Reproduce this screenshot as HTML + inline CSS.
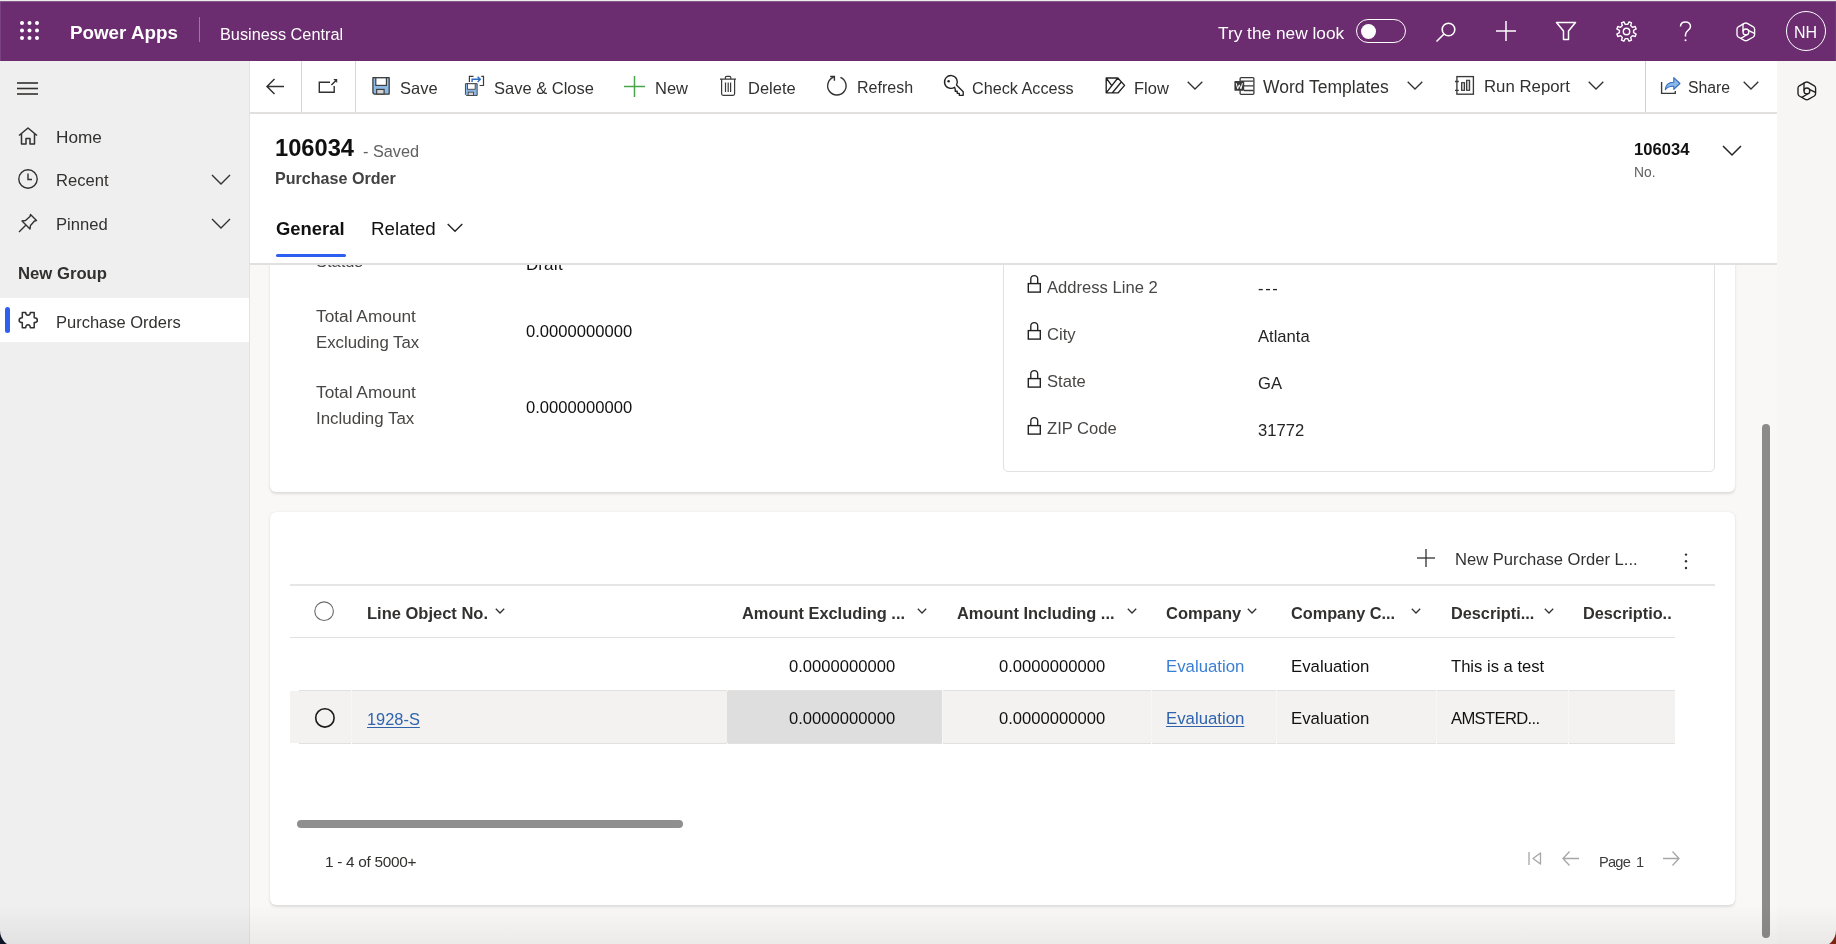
<!DOCTYPE html><html><head><meta charset="utf-8"><style>
html,body{margin:0;padding:0;width:1836px;height:944px;overflow:hidden;font-family:"Liberation Sans",sans-serif;}
body{position:relative}
.t{position:absolute;white-space:nowrap;will-change:transform}
svg{overflow:visible}
</style></head><body>
<div style="position:absolute;left:0px;top:0px;width:1836px;height:944px;background:#f9f8f7"></div>
<div style="position:absolute;left:0px;top:61px;width:249px;height:883px;background:#efefef"></div>
<div style="position:absolute;left:249px;top:61px;width:1px;height:883px;background:#e3e3e3"></div>
<div style="position:absolute;left:1777px;top:61px;width:59px;height:883px;background:#f7f6f5"></div>
<div style="position:absolute;left:250px;top:61px;width:1527px;height:52px;background:#fff"></div>
<div style="position:absolute;left:250px;top:112px;width:1527px;height:2px;background:#e2e0de"></div>
<div style="position:absolute;left:250px;top:114px;width:1527px;height:149px;background:#fff"></div>
<div style="position:absolute;left:250px;top:263px;width:1527px;height:2px;background:#e0e0e0"></div>
<div style="position:absolute;left:0px;top:0px;width:1836px;height:1px;background:#e9ece9"></div>
<div style="position:absolute;left:0px;top:1px;width:1836px;height:60px;background:#6b2d70"></div>
<div style="position:absolute;left:0px;top:1px;width:1836px;height:1px;background:#875a8b"></div>
<div style="position:absolute;left:0px;top:2px;width:1px;height:59px;background:#7a4280"></div>
<div style="position:absolute;left:1835px;top:2px;width:1px;height:59px;background:#74397a"></div>
<svg style="position:absolute;left:20px;top:21px;" width="20" height="20" viewBox="0 0 20 20"><circle cx="2.0" cy="2.0" r="2" fill="#fff"/><circle cx="2.0" cy="9.5" r="2" fill="#fff"/><circle cx="2.0" cy="17.0" r="2" fill="#fff"/><circle cx="9.5" cy="2.0" r="2" fill="#fff"/><circle cx="9.5" cy="9.5" r="2" fill="#fff"/><circle cx="9.5" cy="17.0" r="2" fill="#fff"/><circle cx="17.0" cy="2.0" r="2" fill="#fff"/><circle cx="17.0" cy="9.5" r="2" fill="#fff"/><circle cx="17.0" cy="17.0" r="2" fill="#fff"/></svg>
<div class="t" style="left:70px;top:24.09px;font-size:18.8px;line-height:18.8px;font-weight:700;color:#fff;">Power Apps</div>
<div style="position:absolute;left:199px;top:17px;width:1px;height:25px;background:rgba(255,255,255,0.35)"></div>
<div class="t" style="left:220px;top:25.50px;font-size:16.3px;line-height:16.3px;font-weight:400;color:#fff;">Business Central</div>
<div class="t" style="left:1218px;top:24.66px;font-size:17.3px;line-height:17.3px;font-weight:400;color:#fff;">Try the new look</div>
<div style="position:absolute;left:1356px;top:19px;width:50px;height:24px;border:1.5px solid #fff;border-radius:12px;box-sizing:border-box"></div>
<div style="position:absolute;left:1361px;top:24px;width:15px;height:15px;background:#fff;border-radius:50%"></div>
<svg style="position:absolute;left:1434px;top:20px;" width="24" height="24" viewBox="0 0 24 24"><circle cx="14.5" cy="9.5" r="6.3" fill="none" stroke="#fff" stroke-width="1.6"/><line x1="10" y1="14" x2="2.5" y2="21.5" stroke="#fff" stroke-width="1.6"/></svg>
<svg style="position:absolute;left:1496px;top:21px;" width="20" height="20" viewBox="0 0 20 20"><line x1="10" y1="0" x2="10" y2="20" stroke="#fff" stroke-width="1.5"/><line x1="0" y1="10" x2="20" y2="10" stroke="#fff" stroke-width="1.5"/></svg>
<svg style="position:absolute;left:1555px;top:21px;" width="22" height="20" viewBox="0 0 22 20"><path d="M1.5 1.5 H20.5 L13.5 10 V18.5 H8.5 V10 Z" fill="none" stroke="#fff" stroke-width="1.5" stroke-linejoin="round"/></svg>
<svg style="position:absolute;left:1615.5px;top:20.5px;" width="21" height="21" viewBox="0 0 21 21"><path d="M17.59 11.74 L20.16 13.10 L19.16 15.49 L16.39 14.64 L14.64 16.39 L15.49 19.16 L13.10 20.16 L11.74 17.59 L9.26 17.59 L7.90 20.16 L5.51 19.16 L6.36 16.39 L4.61 14.64 L1.84 15.49 L0.84 13.10 L3.41 11.74 L3.41 9.26 L0.84 7.90 L1.84 5.51 L4.61 6.36 L6.36 4.61 L5.51 1.84 L7.90 0.84 L9.26 3.41 L11.74 3.41 L13.10 0.84 L15.49 1.84 L14.64 4.61 L16.39 6.36 L19.16 5.51 L20.16 7.90 L17.59 9.26 Z" fill="none" stroke="#fff" stroke-width="1.4" stroke-linejoin="round"/><circle cx="10.5" cy="10.5" r="3.2" fill="none" stroke="#fff" stroke-width="1.4"/></svg>
<svg style="position:absolute;left:1679px;top:21px;" width="13" height="21" viewBox="0 0 13 21"><path d="M1.5 5.5 C1.5 2.5 3.8 0.9 6.5 0.9 C9.2 0.9 11.5 2.6 11.5 5.5 C11.5 9 6.5 9.5 6.5 13.5 V15.5" fill="none" stroke="#fff" stroke-width="1.5"/><circle cx="6.5" cy="19.3" r="1" fill="#fff"/></svg>
<svg style="position:absolute;left:1731px;top:17px;" width="30" height="30" viewBox="0 0 30 30"><path d="M13.3 6.4 Q14.8 5.6 16.3 6.4 L22.3 9.8 Q23.6 10.6 23.6 12.2 V17.6 Q23.6 19.2 22.3 20 L16.3 23.4 Q14.8 24.2 13.3 23.4 L7.3 20 Q6 19.2 6 17.6 V12.2 Q6 10.6 7.3 9.8 Z" fill="none" stroke="#fff" stroke-width="1.35" stroke-linejoin="round"/><circle cx="14.9" cy="14.9" r="2.9" fill="none" stroke="#fff" stroke-width="1.35"/><path d="M12 6.6 V14.6 M17.3 13.4 L23.4 16.4 M16.3 17.5 L9.9 21.4" fill="none" stroke="#fff" stroke-width="1.35"/></svg>
<div style="position:absolute;left:1786px;top:11px;width:40px;height:40px;border:1.5px solid #fff;border-radius:50%;box-sizing:border-box"></div>
<div class="t" style="left:1794px;top:24.66px;font-size:16px;line-height:16px;font-weight:400;color:#fff;">NH</div>
<svg style="position:absolute;left:17px;top:82px;" width="21" height="13" viewBox="0 0 21 13"><line x1="0" y1="1" x2="21" y2="1" stroke="#323130" stroke-width="1.6"/><line x1="0" y1="6.5" x2="21" y2="6.5" stroke="#323130" stroke-width="1.6"/><line x1="0" y1="12" x2="21" y2="12" stroke="#323130" stroke-width="1.6"/></svg>
<svg style="position:absolute;left:18px;top:127px;" width="20" height="18" viewBox="0 0 20 18"><path d="M1 8.5 L10 1 L19 8.5 M3.5 6.5 V17 H8 V11.5 H12 V17 H16.5 V6.5" fill="none" stroke="#323130" stroke-width="1.5" stroke-linejoin="round"/></svg>
<div class="t" style="left:56px;top:129.24px;font-size:17.2px;line-height:17.2px;font-weight:400;color:#323130;">Home</div>
<svg style="position:absolute;left:18px;top:169px;" width="20" height="20" viewBox="0 0 20 20"><circle cx="10" cy="10" r="9.2" fill="none" stroke="#323130" stroke-width="1.4"/><path d="M10 4.5 V10.5 H14" fill="none" stroke="#323130" stroke-width="1.4"/></svg>
<div class="t" style="left:56px;top:173.35px;font-size:16.6px;line-height:16.6px;font-weight:400;color:#323130;">Recent</div>
<svg style="position:absolute;left:211px;top:174px;" width="20" height="11" viewBox="0 0 20 11"><path d="M1 1 L10 10 L19 1" fill="none" stroke="#323130" stroke-width="1.4"/></svg>
<svg style="position:absolute;left:18px;top:213px;" width="20" height="20" viewBox="0 0 20 20"><path d="M12.5 1.5 L18.5 7.5 L16.5 8 L12.5 12.5 L12 16 L4 8 L7.5 7.5 L12 3.5 Z M7.5 12.5 L1 19" fill="none" stroke="#323130" stroke-width="1.4" stroke-linejoin="round"/></svg>
<div class="t" style="left:56px;top:216.55px;font-size:16.6px;line-height:16.6px;font-weight:400;color:#323130;">Pinned</div>
<svg style="position:absolute;left:211px;top:218px;" width="20" height="11" viewBox="0 0 20 11"><path d="M1 1 L10 10 L19 1" fill="none" stroke="#323130" stroke-width="1.4"/></svg>
<div class="t" style="left:18px;top:265.66px;font-size:16.7px;line-height:16.7px;font-weight:700;color:#323130;">New Group</div>
<div style="position:absolute;left:0px;top:298px;width:249px;height:44px;background:#fff"></div>
<div style="position:absolute;left:5px;top:307px;width:5px;height:26px;background:#2d5ff0;border-radius:3px"></div>
<svg style="position:absolute;left:14px;top:306px;" width="30" height="30" viewBox="0 0 30 30"><path d="M8.3 6.6 H11.7 C11.7 10.2 16.3 10.2 16.3 6.6 H20.2 V11.8 C24.4 11.8 24.4 16.6 20.2 16.6 V21.8 H16.3 C16.3 17.6 11.7 17.6 11.7 21.8 H8.3 V16.6 C4.1 16.6 4.1 11.8 8.3 11.8 Z" fill="none" stroke="#323130" stroke-width="1.5" stroke-linejoin="round"/></svg>
<div class="t" style="left:56px;top:314.23px;font-size:16.5px;line-height:16.5px;font-weight:400;color:#323130;">Purchase Orders</div>
<svg style="position:absolute;left:266px;top:78px;" width="19" height="17" viewBox="0 0 19 17"><path d="M8.5 1 L1 8.5 L8.5 16 M1 8.5 H18" fill="none" stroke="#323130" stroke-width="1.5"/></svg>
<div style="position:absolute;left:301px;top:61px;width:1px;height:51px;background:#d6d6d6"></div>
<svg style="position:absolute;left:313px;top:72px;" width="30" height="30" viewBox="0 0 30 30"><path d="M17 10.2 H6.3 V20.3 H21.2 V14" fill="none" stroke="#323130" stroke-width="1.4"/><path d="M18.4 13.1 L23 8.4" fill="none" stroke="#323130" stroke-width="1.45"/><path d="M20.3 7 H24.2 V10.9 Z" fill="#323130"/></svg>
<div style="position:absolute;left:355px;top:61px;width:1px;height:51px;background:#d6d6d6"></div>
<svg style="position:absolute;left:368px;top:72px;" width="30" height="30" viewBox="0 0 30 30"><path d="M4.9 5.6 H21.2 V22 H6.2 L4.9 20.7 Z" fill="#8cb8e8" stroke="#3a3a3a" stroke-width="1.25" stroke-linejoin="round"/><rect x="7.8" y="5.8" width="10.6" height="7.6" fill="#fff" stroke="#3a3a3a" stroke-width="1.15"/><rect x="8.7" y="17.4" width="7.4" height="4.6" fill="#d4d4d4" stroke="#3a3a3a" stroke-width="1.15"/></svg>
<div class="t" style="left:400px;top:79.73px;font-size:16.5px;line-height:16.5px;font-weight:400;color:#323130;">Save</div>
<svg style="position:absolute;left:460px;top:72px;" width="30" height="30" viewBox="0 0 30 30"><g transform="translate(1.9,7.6) scale(0.72)"><path d="M4.9 5.6 H21.2 V22 H6.2 L4.9 20.7 Z" fill="#8cb8e8" stroke="#3a3a3a" stroke-width="1.25" stroke-linejoin="round"/><rect x="7.8" y="5.8" width="10.6" height="7.6" fill="#fff" stroke="#3a3a3a" stroke-width="1.15"/><rect x="8.7" y="17.4" width="7.4" height="4.6" fill="#d4d4d4" stroke="#3a3a3a" stroke-width="1.15"/></g><path d="M9.4 10 V4.4 H13.5 M21.3 4.4 H23.5 V13.5 H19.6" fill="none" stroke="#3a3a3a" stroke-width="1.2"/><path d="M12.1 10 V7.3 H20.2 M17.6 4.7 L20.3 7.3 L17.6 9.9" fill="none" stroke="#2f6cbf" stroke-width="1.4"/></svg>
<div class="t" style="left:494px;top:79.73px;font-size:16.5px;line-height:16.5px;font-weight:400;color:#323130;">Save &amp; Close</div>
<svg style="position:absolute;left:624px;top:76px;" width="21" height="21" viewBox="0 0 21 21"><line x1="10.5" y1="0" x2="10.5" y2="21" stroke="#4aa54a" stroke-width="1.5"/><line x1="0" y1="10.5" x2="21" y2="10.5" stroke="#4aa54a" stroke-width="1.5"/></svg>
<div class="t" style="left:655px;top:79.73px;font-size:16.5px;line-height:16.5px;font-weight:400;color:#323130;">New</div>
<svg style="position:absolute;left:714px;top:72px;" width="30" height="30" viewBox="0 0 30 30"><path d="M6 7.2 H22 M11.4 7.2 V5.4 Q11.4 4.3 12.5 4.3 H15.7 Q16.8 4.3 16.8 5.4 V7.2 M7.6 7.2 V21.8 Q7.6 23.3 9.1 23.3 H19.1 Q20.6 23.3 20.6 21.8 V7.2 M11.5 10.6 V20 M14.2 10.6 V20 M16.6 10.6 V20" fill="none" stroke="#3a3a3a" stroke-width="1.2"/></svg>
<div class="t" style="left:748px;top:79.73px;font-size:16.5px;line-height:16.5px;font-weight:400;color:#323130;">Delete</div>
<svg style="position:absolute;left:822px;top:72px;" width="30" height="30" viewBox="0 0 30 30"><path d="M18.4 5.3 A9.2 9.2 0 1 1 11.6 5.2" fill="none" stroke="#323130" stroke-width="1.35"/><path d="M8.2 4.5 H12.4 V8.7" fill="none" stroke="#323130" stroke-width="1.4"/></svg>
<div class="t" style="left:857px;top:80.16px;font-size:16px;line-height:16px;font-weight:400;color:#323130;">Refresh</div>
<svg style="position:absolute;left:938px;top:72px;" width="30" height="30" viewBox="0 0 30 30"><path d="M16.6 15.2 A6.4 6.4 0 1 1 18.5 13.1 L25.2 19.8 V23.3 H21.3 V21.3 H19.2 V19.2 H17.2 V17 Z" fill="none" stroke="#222" stroke-width="1.35" stroke-linejoin="round"/><circle cx="10.6" cy="9.2" r="1.25" fill="#222"/></svg>
<div class="t" style="left:972px;top:79.99px;font-size:16.2px;line-height:16.2px;font-weight:400;color:#323130;">Check Access</div>
<svg style="position:absolute;left:1100px;top:72px;" width="30" height="30" viewBox="0 0 30 30"><path d="M6.2 6 H17.8 L24.6 13.4 L18.2 20.8 H6.2 Z M6.2 6 L11.4 13.1 M17.8 6 L6.2 20.8 M21.3 10 L12.4 20.8" fill="none" stroke="#222" stroke-width="1.35" stroke-linejoin="round"/></svg>
<div class="t" style="left:1134px;top:79.73px;font-size:16.5px;line-height:16.5px;font-weight:400;color:#323130;">Flow</div>
<svg style="position:absolute;left:1187px;top:81.3px;" width="16" height="9" viewBox="0 0 16 9"><path d="M0.7 0.7 L8 8 L15.3 0.7" fill="none" stroke="#323130" stroke-width="1.3"/></svg>
<svg style="position:absolute;left:1230px;top:72px;" width="30" height="30" viewBox="0 0 30 30"><rect x="10.1" y="5.7" width="13.8" height="16.6" rx="1" fill="none" stroke="#3a3a3a" stroke-width="1.3"/><path d="M10.5 9.2 H23.5 M14 13.9 H23.5 M14 18.5 H23.5" stroke="#3a3a3a" stroke-width="1.3"/><rect x="4.4" y="9.1" width="9.8" height="9.6" rx="0.6" fill="#3a3a3a"/><path d="M6.2 11.2 L7.7 16.8 L9.3 12.8 L10.9 16.8 L12.4 11.2" fill="none" stroke="#fff" stroke-width="1"/></svg>
<div class="t" style="left:1263px;top:78.89px;font-size:17.5px;line-height:17.5px;font-weight:400;color:#323130;">Word Templates</div>
<svg style="position:absolute;left:1407px;top:81.3px;" width="16" height="9" viewBox="0 0 16 9"><path d="M0.7 0.7 L8 8 L15.3 0.7" fill="none" stroke="#323130" stroke-width="1.3"/></svg>
<svg style="position:absolute;left:1452px;top:72px;" width="30" height="30" viewBox="0 0 30 30"><rect x="4.9" y="4.6" width="16.5" height="17.6" fill="none" stroke="#3a3a3a" stroke-width="1.35"/><path d="M3 9.5 H6.8 M3 18.4 H6.8" stroke="#3a3a3a" stroke-width="1.3"/><rect x="9.6" y="10.7" width="2.9" height="7.6" fill="#c8c8c8" stroke="#3a3a3a" stroke-width="1.15"/><rect x="14.6" y="8.3" width="3" height="10" fill="#c8c8c8" stroke="#3a3a3a" stroke-width="1.15"/></svg>
<div class="t" style="left:1484px;top:79.48px;font-size:16.8px;line-height:16.8px;font-weight:400;color:#323130;">Run Report</div>
<svg style="position:absolute;left:1588px;top:81.3px;" width="16" height="9" viewBox="0 0 16 9"><path d="M0.7 0.7 L8 8 L15.3 0.7" fill="none" stroke="#323130" stroke-width="1.3"/></svg>
<div style="position:absolute;left:1645px;top:61px;width:1px;height:51px;background:#d0d0d0"></div>
<svg style="position:absolute;left:1656px;top:72px;" width="30" height="30" viewBox="0 0 30 30"><path d="M5.6 10 V21.3 H19.3 V19" fill="none" stroke="#3a3a3a" stroke-width="1.35"/><path d="M9.3 17.6 C9.8 12.5 13.2 10.2 17.8 10.3 V5.6 L23.9 11.5 L17.8 17.3 V14.3 C14 14.1 11 15.3 9.3 17.6 Z" fill="#8cb8e8" stroke="#2f6cbf" stroke-width="1.1" stroke-linejoin="round"/></svg>
<div class="t" style="left:1688px;top:80.33px;font-size:15.8px;line-height:15.8px;font-weight:400;color:#323130;">Share</div>
<svg style="position:absolute;left:1743px;top:81.3px;" width="16" height="9" viewBox="0 0 16 9"><path d="M0.7 0.7 L8 8 L15.3 0.7" fill="none" stroke="#323130" stroke-width="1.3"/></svg>
<svg style="position:absolute;left:1792px;top:76px;" width="30" height="30" viewBox="0 0 30 30"><path d="M13.3 6.4 Q14.8 5.6 16.3 6.4 L22.3 9.8 Q23.6 10.6 23.6 12.2 V17.6 Q23.6 19.2 22.3 20 L16.3 23.4 Q14.8 24.2 13.3 23.4 L7.3 20 Q6 19.2 6 17.6 V12.2 Q6 10.6 7.3 9.8 Z" fill="none" stroke="#1f1f1f" stroke-width="1.35" stroke-linejoin="round"/><circle cx="14.9" cy="14.9" r="2.9" fill="none" stroke="#1f1f1f" stroke-width="1.35"/><path d="M12 6.6 V14.6 M17.3 13.4 L23.4 16.4 M16.3 17.5 L9.9 21.4" fill="none" stroke="#1f1f1f" stroke-width="1.35"/></svg>
<div class="t" style="left:275px;top:136.94px;font-size:23.7px;line-height:23.7px;font-weight:700;color:#111;">106034</div>
<div class="t" style="left:363px;top:143.20px;font-size:16.3px;line-height:16.3px;font-weight:400;color:#616161;">- Saved</div>
<div class="t" style="left:275px;top:169.67px;font-size:16.1px;line-height:16.1px;font-weight:700;color:#424242;">Purchase Order</div>
<div class="t" style="left:276px;top:220.02px;font-size:18.4px;line-height:18.4px;font-weight:700;color:#111;">General</div>
<div class="t" style="left:371px;top:219.69px;font-size:18.8px;line-height:18.8px;font-weight:400;color:#111;">Related</div>
<svg style="position:absolute;left:447px;top:223px;" width="16" height="10" viewBox="0 0 16 10"><path d="M0.7 1 L8 8.3 L15.3 1" fill="none" stroke="#242424" stroke-width="1.4"/></svg>
<div style="position:absolute;left:276px;top:254px;width:70px;height:3px;background:#2d5ff0;border-radius:2px"></div>
<div class="t" style="left:1634px;top:141.95px;font-size:16.6px;line-height:16.6px;font-weight:700;color:#111;">106034</div>
<div class="t" style="left:1634px;top:166.22px;font-size:13.8px;line-height:13.8px;font-weight:400;color:#616161;">No.</div>
<svg style="position:absolute;left:1722px;top:145px;" width="20" height="11" viewBox="0 0 20 11"><path d="M1 1 L10 10 L19 1" fill="none" stroke="#242424" stroke-width="1.5"/></svg>
<div style="position:absolute;left:250px;top:265px;width:1527px;height:679px;overflow:hidden"><div style="position:absolute;left:-250px;top:-265px;width:1836px;height:944px">
<div style="position:absolute;left:270px;top:150px;width:1465px;height:342px;background:#fff;border-radius:6px;box-shadow:0 1.5px 3px rgba(0,0,0,0.11),0 0 1px rgba(0,0,0,0.10)"></div>
<div class="t" style="left:316px;top:253.23px;font-size:16.5px;line-height:16.5px;font-weight:400;color:#484644;">Status</div>
<div class="t" style="left:526px;top:255.71px;font-size:17px;line-height:17px;font-weight:400;color:#111;">Draft</div>
<div class="t" style="left:316px;top:307.76px;font-size:17.3px;line-height:17.3px;font-weight:400;color:#484644;">Total Amount</div>
<div class="t" style="left:316px;top:334.68px;font-size:16.8px;line-height:16.8px;font-weight:400;color:#484644;">Excluding Tax</div>
<div class="t" style="left:526px;top:324.05px;font-size:16.6px;line-height:16.6px;font-weight:400;color:#111;">0.0000000000</div>
<div class="t" style="left:316px;top:383.66px;font-size:17.3px;line-height:17.3px;font-weight:400;color:#484644;">Total Amount</div>
<div class="t" style="left:316px;top:410.69px;font-size:16.9px;line-height:16.9px;font-weight:400;color:#484644;">Including Tax</div>
<div class="t" style="left:526px;top:399.95px;font-size:16.6px;line-height:16.6px;font-weight:400;color:#111;">0.0000000000</div>
<div style="position:absolute;left:1003px;top:150px;width:712px;height:322px;border:1px solid #e1e1e1;border-radius:5px;box-sizing:border-box"></div>
<svg style="position:absolute;left:1020px;top:270.3px;" width="30" height="30" viewBox="0 0 30 30"><path d="M10.8 13.5 V9 A3.45 3.45 0 0 1 17.7 9 V13.5" fill="none" stroke="#222" stroke-width="1.35"/><rect x="8.3" y="13.6" width="12" height="8.5" fill="none" stroke="#222" stroke-width="1.4"/></svg>
<div class="t" style="left:1047px;top:279.75px;font-size:16.6px;line-height:16.6px;font-weight:400;color:#484644;">Address Line 2</div>
<svg style="position:absolute;left:1020px;top:317.4px;" width="30" height="30" viewBox="0 0 30 30"><path d="M10.8 13.5 V9 A3.45 3.45 0 0 1 17.7 9 V13.5" fill="none" stroke="#222" stroke-width="1.35"/><rect x="8.3" y="13.6" width="12" height="8.5" fill="none" stroke="#222" stroke-width="1.4"/></svg>
<div class="t" style="left:1047px;top:326.65px;font-size:16.6px;line-height:16.6px;font-weight:400;color:#484644;">City</div>
<div class="t" style="left:1258px;top:328.95px;font-size:16.6px;line-height:16.6px;font-weight:400;color:#242424;">Atlanta</div>
<svg style="position:absolute;left:1020px;top:364.6px;" width="30" height="30" viewBox="0 0 30 30"><path d="M10.8 13.5 V9 A3.45 3.45 0 0 1 17.7 9 V13.5" fill="none" stroke="#222" stroke-width="1.35"/><rect x="8.3" y="13.6" width="12" height="8.5" fill="none" stroke="#222" stroke-width="1.4"/></svg>
<div class="t" style="left:1047px;top:373.95px;font-size:16.6px;line-height:16.6px;font-weight:400;color:#484644;">State</div>
<div class="t" style="left:1258px;top:376.05px;font-size:16.6px;line-height:16.6px;font-weight:400;color:#242424;">GA</div>
<svg style="position:absolute;left:1020px;top:411.6px;" width="30" height="30" viewBox="0 0 30 30"><path d="M10.8 13.5 V9 A3.45 3.45 0 0 1 17.7 9 V13.5" fill="none" stroke="#222" stroke-width="1.35"/><rect x="8.3" y="13.6" width="12" height="8.5" fill="none" stroke="#222" stroke-width="1.4"/></svg>
<div class="t" style="left:1047px;top:420.65px;font-size:16.6px;line-height:16.6px;font-weight:400;color:#484644;">ZIP Code</div>
<div class="t" style="left:1258px;top:422.95px;font-size:16.6px;line-height:16.6px;font-weight:400;color:#242424;">31772</div>
<div class="t" style="left:1258px;top:280.55px;font-size:16.6px;line-height:16.6px;font-weight:400;color:#242424;letter-spacing:1.6px">---</div>
<div style="position:absolute;left:270px;top:512px;width:1465px;height:393px;background:#fff;border-radius:6px;box-shadow:0 1.5px 3px rgba(0,0,0,0.11),0 0 1px rgba(0,0,0,0.10)"></div>
<svg style="position:absolute;left:1417px;top:549px;" width="18" height="18" viewBox="0 0 18 18"><line x1="9" y1="0" x2="9" y2="18" stroke="#323130" stroke-width="1.3"/><line x1="0" y1="9" x2="18" y2="9" stroke="#323130" stroke-width="1.3"/></svg>
<div class="t" style="left:1455px;top:551.55px;font-size:16.6px;line-height:16.6px;font-weight:400;color:#323130;">New Purchase Order L...</div>
<svg style="position:absolute;left:1684px;top:552px;" width="4" height="18" viewBox="0 0 4 18"><circle cx="2" cy="2.6" r="1.2" fill="#323130"/><circle cx="2" cy="9.3" r="1.2" fill="#323130"/><circle cx="2" cy="16" r="1.2" fill="#323130"/></svg>
<div style="position:absolute;left:290px;top:584px;width:1425px;height:2px;background:#e6e6e6"></div>
<svg style="position:absolute;left:313px;top:600px;" width="22" height="22" viewBox="0 0 22 22"><circle cx="11.1" cy="11.2" r="9.3" fill="none" stroke="#6e6e6e" stroke-width="1.15"/></svg>
<div class="t" style="left:367px;top:605.13px;font-size:16.5px;line-height:16.5px;font-weight:700;color:#323130;">Line Object No.</div>
<svg style="position:absolute;left:495px;top:608px;" width="10" height="7" viewBox="0 0 10 7"><path d="M0.8 0.8 L5 5 L9.2 0.8" fill="none" stroke="#323130" stroke-width="1.3"/></svg>
<div class="t" style="left:742px;top:605.22px;font-size:16.4px;line-height:16.4px;font-weight:700;color:#323130;">Amount Excluding ...</div>
<svg style="position:absolute;left:917px;top:608px;" width="10" height="7" viewBox="0 0 10 7"><path d="M0.8 0.8 L5 5 L9.2 0.8" fill="none" stroke="#323130" stroke-width="1.3"/></svg>
<div class="t" style="left:957px;top:605.22px;font-size:16.4px;line-height:16.4px;font-weight:700;color:#323130;">Amount Including ...</div>
<svg style="position:absolute;left:1127px;top:608px;" width="10" height="7" viewBox="0 0 10 7"><path d="M0.8 0.8 L5 5 L9.2 0.8" fill="none" stroke="#323130" stroke-width="1.3"/></svg>
<div class="t" style="left:1166px;top:605.13px;font-size:16.5px;line-height:16.5px;font-weight:700;color:#323130;">Company</div>
<svg style="position:absolute;left:1247px;top:608px;" width="10" height="7" viewBox="0 0 10 7"><path d="M0.8 0.8 L5 5 L9.2 0.8" fill="none" stroke="#323130" stroke-width="1.3"/></svg>
<div class="t" style="left:1291px;top:605.30px;font-size:16.3px;line-height:16.3px;font-weight:700;color:#323130;">Company C...</div>
<svg style="position:absolute;left:1411px;top:608px;" width="10" height="7" viewBox="0 0 10 7"><path d="M0.8 0.8 L5 5 L9.2 0.8" fill="none" stroke="#323130" stroke-width="1.3"/></svg>
<div class="t" style="left:1451px;top:605.30px;font-size:16.3px;line-height:16.3px;font-weight:700;color:#323130;">Descripti...</div>
<svg style="position:absolute;left:1544px;top:608px;" width="10" height="7" viewBox="0 0 10 7"><path d="M0.8 0.8 L5 5 L9.2 0.8" fill="none" stroke="#323130" stroke-width="1.3"/></svg>
<div class="t" style="left:1583px;top:605.30px;font-size:16.3px;line-height:16.3px;font-weight:700;color:#323130;">Descriptio..</div>
<div style="position:absolute;left:290px;top:637px;width:1385px;height:1px;background:#e1e1e1"></div>
<div class="t" style="left:789px;top:658.55px;font-size:16.6px;line-height:16.6px;font-weight:400;color:#111;">0.0000000000</div>
<div class="t" style="left:999px;top:658.55px;font-size:16.6px;line-height:16.6px;font-weight:400;color:#111;">0.0000000000</div>
<div class="t" style="left:1166px;top:658.88px;font-size:16.8px;line-height:16.8px;font-weight:400;color:#3b7fd4;">Evaluation</div>
<div class="t" style="left:1291px;top:658.88px;font-size:16.8px;line-height:16.8px;font-weight:400;color:#111;">Evaluation</div>
<div class="t" style="left:1451px;top:658.55px;font-size:16.6px;line-height:16.6px;font-weight:400;color:#111;">This is a test</div>
<div style="position:absolute;left:290px;top:691px;width:1385px;height:52px;background:#f3f2f1"></div>
<div style="position:absolute;left:727px;top:691px;width:215px;height:52px;background:#dedede"></div>
<div style="position:absolute;left:351px;top:691px;width:1px;height:52px;background:#f7f6f5"></div>
<div style="position:absolute;left:942px;top:691px;width:1px;height:52px;background:#f7f6f5"></div>
<div style="position:absolute;left:1151px;top:691px;width:1px;height:52px;background:#f7f6f5"></div>
<div style="position:absolute;left:1276px;top:691px;width:1px;height:52px;background:#f7f6f5"></div>
<div style="position:absolute;left:1436px;top:691px;width:1px;height:52px;background:#f7f6f5"></div>
<div style="position:absolute;left:1568px;top:691px;width:1px;height:52px;background:#f7f6f5"></div>
<div style="position:absolute;left:299px;top:690px;width:52px;height:1px;background:#e1e1e1"></div>
<div style="position:absolute;left:299px;top:743px;width:52px;height:1px;background:#e1e1e1"></div>
<div style="position:absolute;left:352px;top:690px;width:375px;height:1px;background:#e1e1e1"></div>
<div style="position:absolute;left:352px;top:743px;width:375px;height:1px;background:#e1e1e1"></div>
<div style="position:absolute;left:728px;top:690px;width:214px;height:1px;background:#e1e1e1"></div>
<div style="position:absolute;left:728px;top:743px;width:214px;height:1px;background:#e1e1e1"></div>
<div style="position:absolute;left:943px;top:690px;width:208px;height:1px;background:#e1e1e1"></div>
<div style="position:absolute;left:943px;top:743px;width:208px;height:1px;background:#e1e1e1"></div>
<div style="position:absolute;left:1152px;top:690px;width:124px;height:1px;background:#e1e1e1"></div>
<div style="position:absolute;left:1152px;top:743px;width:124px;height:1px;background:#e1e1e1"></div>
<div style="position:absolute;left:1277px;top:690px;width:159px;height:1px;background:#e1e1e1"></div>
<div style="position:absolute;left:1277px;top:743px;width:159px;height:1px;background:#e1e1e1"></div>
<div style="position:absolute;left:1437px;top:690px;width:131px;height:1px;background:#e1e1e1"></div>
<div style="position:absolute;left:1437px;top:743px;width:131px;height:1px;background:#e1e1e1"></div>
<div style="position:absolute;left:1569px;top:690px;width:106px;height:1px;background:#e1e1e1"></div>
<div style="position:absolute;left:1569px;top:743px;width:106px;height:1px;background:#e1e1e1"></div>
<svg style="position:absolute;left:314px;top:707px;" width="22" height="22" viewBox="0 0 22 22"><circle cx="10.9" cy="10.9" r="9.2" fill="none" stroke="#1a1a1a" stroke-width="1.6"/></svg>
<div class="t" style="left:367px;top:711.22px;font-size:16.4px;line-height:16.4px;font-weight:400;color:#2f64ad;text-decoration:underline;text-underline-offset:2px">1928-S</div>
<div class="t" style="left:789px;top:711.05px;font-size:16.6px;line-height:16.6px;font-weight:400;color:#111;">0.0000000000</div>
<div class="t" style="left:999px;top:711.05px;font-size:16.6px;line-height:16.6px;font-weight:400;color:#111;">0.0000000000</div>
<div class="t" style="left:1166px;top:710.88px;font-size:16.8px;line-height:16.8px;font-weight:400;color:#2f64ad;text-decoration:underline;text-underline-offset:2px">Evaluation</div>
<div class="t" style="left:1291px;top:710.88px;font-size:16.8px;line-height:16.8px;font-weight:400;color:#111;">Evaluation</div>
<div class="t" style="left:1451px;top:711.05px;font-size:16.6px;line-height:16.6px;font-weight:400;color:#111;letter-spacing:-0.65px">AMSTERD...</div>
<div style="position:absolute;left:297px;top:820px;width:386px;height:8px;background:#8f8f8f;border-radius:4px"></div>
<div class="t" style="left:325px;top:854.16px;font-size:15.4px;line-height:15.4px;font-weight:400;color:#323130;letter-spacing:-0.3px">1 - 4 of 5000+</div>
<svg style="position:absolute;left:1528px;top:852px;" width="14" height="13" viewBox="0 0 14 13"><line x1="1" y1="0" x2="1" y2="13" stroke="#a6a6a6" stroke-width="1.3"/><path d="M12.5 1 L5 6.5 L12.5 12 Z" fill="none" stroke="#a6a6a6" stroke-width="1.3" stroke-linejoin="round"/></svg>
<svg style="position:absolute;left:1562px;top:851px;" width="17" height="15" viewBox="0 0 17 15"><path d="M7.5 0.5 L1 7.5 L7.5 14.5 M1 7.5 H17" fill="none" stroke="#a6a6a6" stroke-width="1.3"/></svg>
<div class="t" style="left:1599px;top:855.14px;font-size:14.6px;line-height:14.6px;font-weight:400;color:#3b3b3b;letter-spacing:-0.75px;word-spacing:2.5px">Page 1</div>
<svg style="position:absolute;left:1663px;top:851px;" width="17" height="15" viewBox="0 0 17 15"><path d="M9.5 0.5 L16 7.5 L9.5 14.5 M16 7.5 H0" fill="none" stroke="#a6a6a6" stroke-width="1.3"/></svg>
</div></div>
<div style="position:absolute;left:1762px;top:424px;width:8px;height:514px;background:#8b8b8b;border-radius:4px"></div>
<div style="position:absolute;left:0px;top:904px;width:1836px;height:40px;background:linear-gradient(to bottom,rgba(0,0,0,0),rgba(0,0,0,0.055))"></div>
<svg style="position:absolute;left:0;top:928px" width="18" height="16"><path d="M0 2.5 A16.5 16.5 0 0 0 16.5 19 L0 19 Z" fill="#0d1628"/></svg>
<svg style="position:absolute;left:1818px;top:928px" width="18" height="16"><path d="M18 2.5 A16.5 16.5 0 0 1 1.5 19 L18 19 Z" fill="#7e2614"/></svg>
</body></html>
